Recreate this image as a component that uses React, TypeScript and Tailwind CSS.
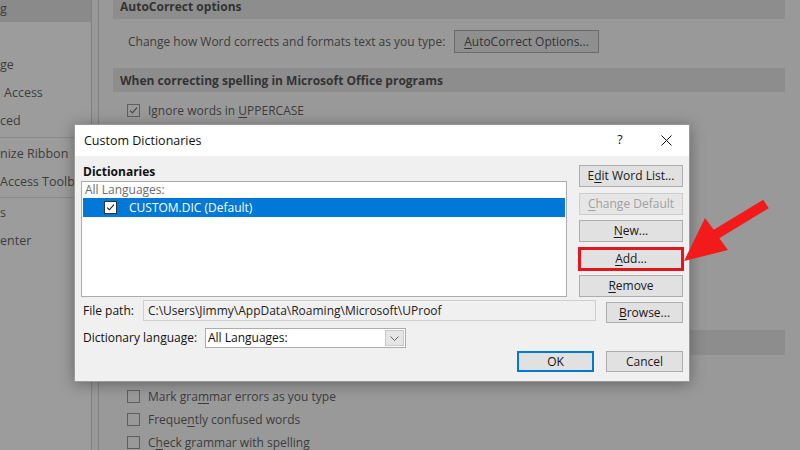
import React from "react";

const U = ({ children }: { children: React.ReactNode }) => (
  <span className="underline underline-offset-[2px] decoration-[1px]">{children}</span>
);

function CheckMark({ className }: { className?: string }) {
  return (
    <svg viewBox="0 0 13 13" className={className}>
      <path d="M2.6 6.6 L5.2 9.3 L10.6 3.2" fill="none" stroke="currentColor" strokeWidth="1.2" />
    </svg>
  );
}

function BgCheck({ checked, children }: { checked?: boolean; children: React.ReactNode }) {
  return (
    <div className="flex h-[23px] items-center pl-[14px]">
      <div className="flex h-[13px] w-[13px] items-center justify-center border border-[#5e5e5e] text-[#3a3a3a]">
        {checked && <CheckMark className="h-[11px] w-[11px]" />}
      </div>
      <span className="ml-[8px] pt-[1px] text-[12px] text-[#3c3c3c]">{children}</span>
    </div>
  );
}

function Band({ children, className = "" }: { children: React.ReactNode; className?: string }) {
  return (
    <div className={"flex items-center bg-[#8d8d8d] pl-[7px] pt-[1px] text-[12px] font-bold text-[#333333] " + className}>
      {children}
    </div>
  );
}

function Btn({
  children,
  className = "",
  disabled,
}: {
  children: React.ReactNode;
  className?: string;
  disabled?: boolean;
}) {
  return (
    <div
      className={
        "flex items-center justify-center border text-[12px] " +
        (disabled
          ? "border-[#cccccc] bg-[#e6e6e6] text-[#a0a0a0] "
          : "border-[#adadad] bg-[#e1e1e1] text-[#1a1a1a] ") +
        className
      }
    >
      {children}
    </div>
  );
}

function Sidebar() {
  const Item = ({ t, sel, extra = "" }: { t: string; sel?: boolean; extra?: string }) => (
    <div
      className={
        "flex h-[28px] items-center whitespace-nowrap pt-[2px] text-[12.5px] text-[#3c3c3c] " +
        (sel ? "bg-[#8a8a8a] " : "") +
        extra
      }
    >
      {t}
    </div>
  );
  return (
    <div className="flex w-[92px] shrink-0 flex-col overflow-hidden border-r border-[#808080] bg-[#9c9c9c] *:shrink-0">
      <div className="mt-[-6px]" />
      <Item t="g" sel />
      <Item t="" />
      <Item t="ge" />
      <Item t="Access" extra="pl-[4px]" />
      <Item t="ced" />
      <div className="mt-[3px] h-px bg-[#8a8a8a]" />
      <div className="h-[1px]" />
      <Item t="nize Ribbon" />
      <Item t="Access Toolbar" />
      <div className="mt-[2px] h-px bg-[#8a8a8a]" />
      <Item t="s" />
      <Item t="enter" />
    </div>
  );
}

function Main() {
  return (
    <div className="flex min-w-0 flex-1 flex-col overflow-hidden pl-[14px] pr-[15px] *:shrink-0">
      <Band className="mt-[-6px] h-[25px]">AutoCorrect options</Band>
      <div className="mt-[11px] flex h-[23px] items-center pl-[15px]">
        <span className="w-[326px] pt-[1px] text-[12px] text-[#3c3c3c]">
          Change how Word corrects and formats text as you type:
        </span>
        <div className="flex h-[23px] w-[145px] items-center justify-center border border-[#6a6a6a] bg-[#8f8f8f] text-[12px] text-[#333]">
          <U>A</U>utoCorrect Options...
        </div>
      </div>
      <Band className="mt-[15px] h-[24px]">When correcting spelling in Microsoft Office programs</Band>
      <div className="mt-[7px]">
        <BgCheck checked>
          Ignore words in <U>U</U>PPERCASE
        </BgCheck>
      </div>
      <div className="h-[208px]" />
      <Band className="h-[25px]">When correcting spelling and grammar in Word</Band>
      <div className="mt-[30px]">
        <BgCheck>
          Mark gra<U>m</U>mar errors as you type
        </BgCheck>
        <BgCheck>
          Freque<U>n</U>tly confused words
        </BgCheck>
        <BgCheck>
          C<U>h</U>eck grammar with spelling
        </BgCheck>
      </div>
    </div>
  );
}

function Dialog() {
  return (
    <div className="absolute left-[74px] top-[124px] flex h-[258px] w-[616px] flex-col border border-[#9a9a9a] bg-[#f0f0f0] text-[#111] shadow-[0_2px_14px_rgba(0,0,0,0.35)]">
      {/* title bar */}
      <div className="flex h-[31px] shrink-0 items-center bg-white">
        <span className="pl-[9px] pt-[1px] text-[12.5px] text-[#111]">Custom Dictionaries</span>
        <div className="ml-auto flex h-full">
          <div className="flex h-full w-[46px] items-center justify-center text-[12.5px] text-[#111]">?</div>
          <div className="flex h-full w-[46px] items-center justify-center">
            <svg viewBox="0 0 11 11" className="h-[11px] w-[11px]">
              <path d="M0.5 0.5 L10.5 10.5 M10.5 0.5 L0.5 10.5" stroke="#111" strokeWidth="1" fill="none" />
            </svg>
          </div>
        </div>
      </div>
      {/* body */}
      <div className="flex flex-1 flex-col px-[6px] pt-[9px]">
        <div className="flex gap-[12px]">
          <div className="flex w-[486px] flex-col">
            <div className="mt-[-2px] flex h-[18px] items-center pl-[2px] text-[12px] font-bold">Dictionaries</div>
            <div className="h-[116px] border border-[#acacac] bg-white px-px">
              <div className="flex h-[16px] items-center pl-[2px] text-[12px] text-[#6d6d6d]">All Languages:</div>
              <div className="flex h-[19px] items-center bg-[#0078d7] pl-[21px]">
                <div className="flex h-[13px] w-[13px] items-center justify-center border border-[#333] bg-white text-[#111]">
                  <CheckMark className="h-[11px] w-[11px]" />
                </div>
                <span className="ml-[12px] text-[12px] text-white">CUSTOM.DIC (Default)</span>
              </div>
            </div>
          </div>
          <div className="flex w-[104px] flex-col gap-[5.5px]">
            <Btn className="h-[22px]">
              E<U>d</U>it Word List...
            </Btn>
            <Btn className="h-[22px]" disabled>
              <U>C</U>hange Default
            </Btn>
            <Btn className="h-[22px]">
              <U>N</U>ew...
            </Btn>
            <Btn className="h-[22px] outline outline-[3px] outline-offset-[-2px] outline-[#e3161d]">
              <U>A</U>dd...
            </Btn>
            <Btn className="h-[22px]">
              <U>R</U>emove
            </Btn>
          </div>
        </div>
        {/* file path */}
        <div className="mt-[3px] flex items-start">
          <div className="flex h-[21px] w-[62px] items-center pl-[2px] text-[12px]">File path:</div>
          <div className="flex h-[21px] w-[453px] items-center border border-[#cfcfcf] bg-[#f0f0f0] pl-[4px] text-[12px] text-[#222]">
            C:\Users\Jimmy\AppData\Roaming\Microsoft\UProof
          </div>
          <Btn className="ml-[10px] mt-[2px] h-[21px] w-[77px]">
            <U>B</U>rowse...
          </Btn>
        </div>
        {/* language */}
        <div className="mt-[5px] flex items-center">
          <div className="flex h-[20px] w-[124px] items-center pl-[2px] text-[12px]">
            Dictionary lan<U>g</U>uage:
          </div>
          <div className="flex h-[20px] w-[201px] items-center border border-[#acacac] bg-white pl-[2px] pr-px text-[12px]">
            <span>All Languages:</span>
            <div className="ml-auto flex h-[16px] w-[19px] items-center justify-center border border-[#c8c8c8] bg-[#e5e5e5]">
              <svg viewBox="0 0 9 5" className="h-[5px] w-[9px]">
                <path d="M0.5 0.5 L4.5 4.5 L8.5 0.5" fill="none" stroke="#666" strokeWidth="1" />
              </svg>
            </div>
          </div>
        </div>
        {/* OK / Cancel */}
        <div className="mt-[3px] flex justify-end gap-[12px]">
          <div className="flex h-[21px] w-[77px] items-center justify-center border-2 border-[#0078d7] bg-[#e1e1e1] text-[12px] text-[#111]">
            OK
          </div>
          <Btn className="h-[21px] w-[77px]">Cancel</Btn>
        </div>
      </div>
    </div>
  );
}

export default function App() {
  return (
    <div className="relative h-[450px] w-[800px] overflow-hidden bg-[#999999] font-['Open_Sans','Noto_Sans',sans-serif] leading-none">
      <div className="flex h-full">
        <Sidebar />
        <div className="w-[7px] shrink-0 border-r border-[#828282]" />
        <Main />
      </div>
      <Dialog />
      <svg viewBox="0 0 800 450" className="pointer-events-none absolute inset-0 h-[450px] w-[800px]">
        <polygon
          points="684,261 705,218 713.7,229.8 763.2,199.8 768.8,208.2 719.3,238.2 728,250"
          fill="#f31a1c"
        />
      </svg>
    </div>
  );
}
